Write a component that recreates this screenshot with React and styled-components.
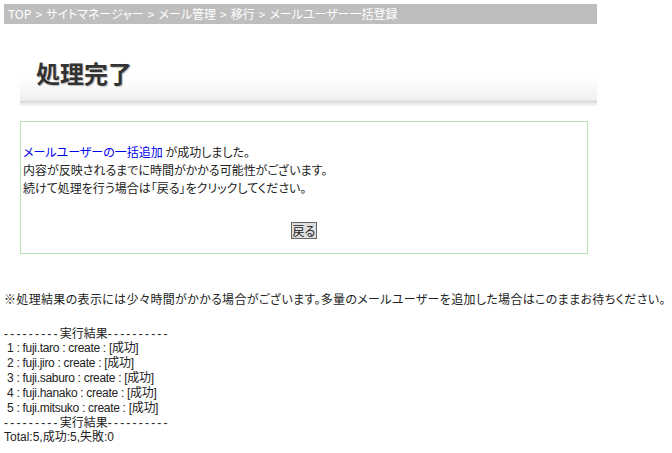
import React from 'react'
import styled, { createGlobalStyle } from 'styled-components'

const GlobalStyle = createGlobalStyle`
  body {
    margin: 0;
    background: #fff;
    color: #222;
    font-family: "Noto Sans CJK JP", "Liberation Sans", sans-serif;
    font-size: 12px;
    font-feature-settings: "palt";
  }
`

const Page = styled.div`
  padding: 4px 0 0 4px;
`

const Breadcrumb = styled.div`
  width: 589px;
  height: 20px;
  line-height: 20px;
  padding-left: 4px;
  background: #bebebe;
  color: #fff;
  white-space: nowrap;
`

const Sep = styled.span`
  margin: 0 4px;
`

const Header = styled.div`
  margin: 16px 0 0 16px;
  width: 577px;
  height: 66px;
  box-sizing: border-box;
  padding: 18px 0 0 16px;
  background: linear-gradient(
    to bottom,
    #fff 0,
    #fff 38px,
    #f0f0f0 60px,
    #dddddd 61px,
    #dddddd 63px,
    #ececec 63px,
    #f3f3f3 66px
  );
`

const Title = styled.h1`
  margin: 0;
  font-size: 24px;
  line-height: 30px;
  font-weight: bold;
  color: #333;
  text-shadow: 1px 1px 1px #bbb;
  font-feature-settings: normal;
`

const MessageBox = styled.div`
  margin: 15px 0 0 16px;
  width: 568px;
  height: 133px;
  box-sizing: border-box;
  border: 1px solid #b5e3b5;
  padding: 21px 2px 0;
  display: flex;
  flex-direction: column;
`

const Line = styled.div`
  line-height: 18px;
  white-space: nowrap;
`

const Link = styled.a`
  color: #0000ee;
  text-decoration: none;
`

const ButtonRow = styled.div`
  display: flex;
  justify-content: center;
  margin-top: 25px;
`

const BackButton = styled.button`
  font: inherit;
  font-size: 12px;
  line-height: 14px;
  padding: 0 1px;
  height: 17px;
  color: #222;
  background: #dedede;
  border: 1px solid #666;
  border-radius: 0;
`

const Note = styled.p`
  margin: 36px 0 0;
  line-height: 18px;
  white-space: nowrap;
  letter-spacing: 0.33px;
`

const Results = styled.div`
  margin-top: 19px;
  white-space: pre;
  font-family: "Liberation Sans", "Noto Sans CJK JP", sans-serif;
`

const Dashes = styled.span`
  letter-spacing: 2.2px;
`

const Row = styled.div`
  height: ${({ $h }) => $h}px;
  line-height: ${({ $h }) => $h}px;
  letter-spacing: ${({ $tight }) => ($tight ? '-0.3px' : '0')};
`

const users = ['fuji.taro', 'fuji.jiro', 'fuji.saburo', 'fuji.hanako', 'fuji.mitsuko']

const Divider = ({ h }) => (
  <Row $h={h}>
    <Dashes>---------</Dashes>実行結果<Dashes>----------</Dashes>
  </Row>
)

export default function App() {
  return (
    <Page>
      <GlobalStyle />
      <Breadcrumb>
        TOP<Sep>&gt;</Sep>サイトマネージャー<Sep>&gt;</Sep>メール管理<Sep>&gt;</Sep>移行<Sep>&gt;</Sep>メールユーザー一括登録
      </Breadcrumb>
      <Header>
        <Title>処理完了</Title>
      </Header>
      <MessageBox>
        <Line>
          <Link href="#">メールユーザーの一括追加</Link> が成功しました。
        </Line>
        <Line>内容が反映されるまでに時間がかかる可能性がございます。</Line>
        <Line>続けて処理を行う場合は「戻る」をクリックしてください。</Line>
        <ButtonRow>
          <BackButton>戻る</BackButton>
        </ButtonRow>
      </MessageBox>
      <Note>※処理結果の表示には少々時間がかかる場合がございます。多量のメールユーザーを追加した場合はこのままお待ちください。</Note>
      <Results>
        <Divider h={14} />
        {users.map((u, i) => (
          <Row key={u} $h={15} $tight>{` ${i + 1} : ${u} : create : [成功]`}</Row>
        ))}
        <Divider h={14} />
        <Row $h={14}>Total:5,成功:5,失敗:0</Row>
      </Results>
    </Page>
  )
}
